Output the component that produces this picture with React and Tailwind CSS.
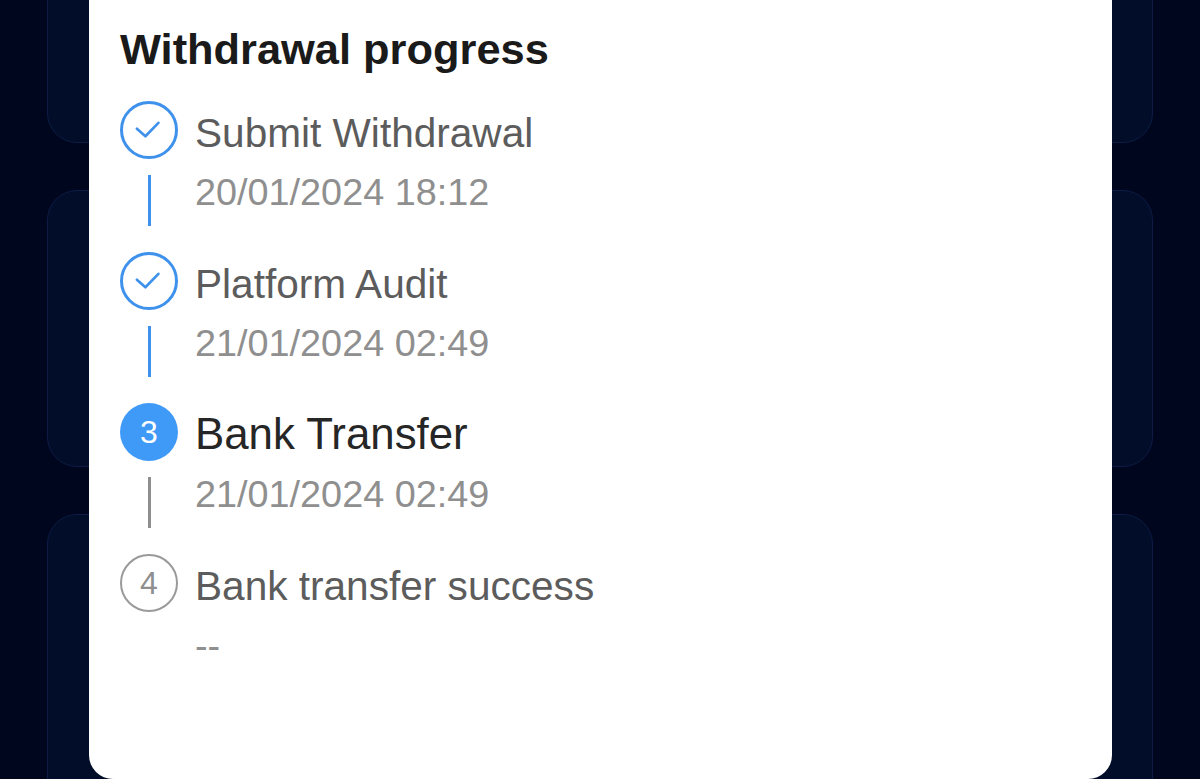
const steps = [
  { title: "Submit Withdrawal", time: "20/01/2024 18:12", state: "done" },
  { title: "Platform Audit", time: "21/01/2024 02:49", state: "done" },
  { title: "Bank Transfer", time: "21/01/2024 02:49", state: "active" },
  { title: "Bank transfer success", time: "--", state: "todo" },
];

function StepIcon({ state, index }) {
  if (state === "done") {
    return (
      <div className="w-[58px] h-[58px] rounded-full border-[3px] border-[#3f92ec] flex items-center justify-center">
        <svg width="58" height="58" viewBox="0 0 58 58" fill="none">
          <path
            d="M15.5 27.5 L25 36 L39.5 21"
            stroke="#3f92ec"
            strokeWidth="3"
            strokeLinecap="round"
            strokeLinejoin="round"
          />
        </svg>
      </div>
    );
  }
  if (state === "active") {
    return (
      <div className="w-[58px] h-[58px] rounded-full bg-[#3f9af7] flex items-center justify-center text-white text-[32px] leading-none">
        {index + 1}
      </div>
    );
  }
  return (
    <div className="w-[58px] h-[58px] rounded-full border-[2.5px] border-[#9a9a9a] flex items-center justify-center text-[#8f8f8f] text-[32px] leading-none">
      {index + 1}
    </div>
  );
}

function Step({ step, index, last }) {
  const active = step.state === "active";
  return (
    <div className="flex flex-col">
      <div className="flex items-center gap-[17px] h-[58px]">
        <StepIcon state={step.state} index={index} />
        <div
          className={
            active
              ? "text-[43.8px] leading-[58px] text-[#262626] mt-[3px]"
              : "text-[40.6px] leading-[58px] text-[#5c5c5c] mt-[5px]"
          }
        >
          {step.title}
        </div>
      </div>
      <div className="flex gap-[17px] h-[93px]">
        <div className="w-[58px] flex justify-center pt-[16px]">
          {!last && (
            <div
              className={
                step.state === "done"
                  ? "w-[3px] h-[51px] bg-[#3f92ec]"
                  : "w-[3px] h-[51px] bg-[#8f8f8f]"
              }
            />
          )}
        </div>
        <div className="text-[37.8px] leading-[60px] text-[#8f8f8f] pt-[3px]">
          {step.time}
        </div>
      </div>
    </div>
  );
}

export default function App() {
  return (
    <div
      className="relative w-[1200px] h-[779px] overflow-hidden bg-[#00061d]"
      style={{ fontFamily: '"Liberation Sans", Arial, sans-serif' }}
    >
      {/* background cards */}
      <div className="flex flex-col gap-[47px] px-[47px] -mt-[80px]">
        <div className="h-[223px] rounded-[30px] bg-[#020d2a] border border-[#0c1c45]" />
        <div className="h-[277px] rounded-[30px] bg-[#020d2a] border border-[#0c1c45]" />
        <div className="h-[360px] rounded-[30px] bg-[#020d2a] border border-[#0c1c45]" />
      </div>

      {/* dialog */}
      <div className="absolute left-[89px] right-[88px] -top-[40px] bottom-0 bg-white rounded-[24px] pt-[64px] px-[31px]">
        <h2 className="text-[43.4px] leading-[50px] font-bold text-[#1a1a1a]">
          Withdrawal progress
        </h2>
        <div className="mt-[27px] flex flex-col">
          {steps.map((s, i) => (
            <Step key={s.title} step={s} index={i} last={i === steps.length - 1} />
          ))}
        </div>
      </div>
    </div>
  );
}
